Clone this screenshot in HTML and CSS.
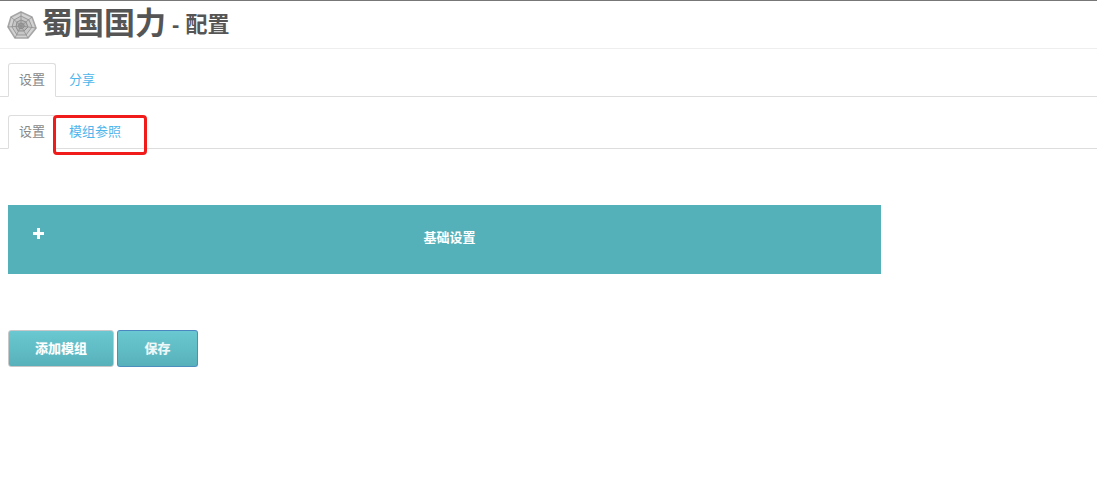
FILE: index.html

```html
<!DOCTYPE html>
<html lang="zh-CN">
<head>
  <meta charset="UTF-8" />
  <title>蜀国国力 - 配置</title>
  <link rel="stylesheet" href="styles.css">
</head>
<body>
  <header class="page-head">
    <svg class="logo" width="30" height="30" viewBox="0 0 30 30">
      <polygon points="14,1 25,6 29,17 21,27 8,27 1,16 4,6" fill="#d2d2d2" stroke="#a6a6a6" stroke-width="1.6"/>
      <polygon points="14,5 22,9 25,16 19,24 10,24 5,16 7,9" fill="#c6c6c6" stroke="#999"/>
      <polygon points="14,9 19,11 21,16 17,20 11,20 9,16 10,11" fill="#b6b6b6" stroke="#8f8f8f"/>
      <polygon points="14,12 16.500,13 17.500,15.500 15.500,17.500 12.500,17.500 11.500,15.500 12,13" fill="#a0a0a0" stroke="#858585" stroke-width=".8"/>
      <path d="M14 1V15M25 6L14 15M29 17L14 15M21 27L14 15M8 27L14 15M1 16L14 15M4 6L14 15" stroke="#8f8f8f" stroke-width=".8" fill="none"/>
    </svg>
    <h1>蜀国国力</h1>
    <span class="sub">- 配置</span>
  </header>

  <ul class="tabs tabs-main">
    <li class="active">设置</li>
    <li>分享</li>
  </ul>

  <ul class="tabs tabs-sub">
    <li class="active">设置</li>
    <li>模组参照</li>
    <li class="mark"></li>
  </ul>

  <section class="panel">
    <svg class="plus" width="11" height="11" viewBox="0 0 11 11"><path d="M4 0h3v4h4v3H7v4H4V7H0V4h4z" fill="#fff"/></svg>
    <span class="panel-title">基础设置</span>
  </section>

  <div class="actions">
    <button class="btn btn-add">添加模组</button>
    <button class="btn btn-save">保存</button>
  </div>
</body>
</html>
```

FILE: styles.css

```css
* { box-sizing: border-box; margin: 0; padding: 0; }
html, body { height: 100%; }
body { font-family: "Liberation Sans", "Noto Sans CJK SC", sans-serif; background: #fff; color: #555; border-top: 1px solid #777; font-size: 13px; overflow: hidden; }

.page-head { height: 48px; border-bottom: 1px solid #eee; padding: 7px 0 0 7px; display: flex; align-items: flex-start; }
.logo { margin-top: 3px; flex: none; }
.page-head h1 { font-size: 31px; line-height: 32px; font-weight: bold; color: #555; margin-left: 5px; }
.sub { font-size: 22px; line-height: 32px; font-weight: bold; color: #555; margin: 1px 0 0 6px; }

.tabs { list-style: none; display: flex; position: relative; padding-left: 8px; border-bottom: 1px solid #ddd; height: 34px; }
.tabs li { padding: 0 14px 0 13px; line-height: 33px; color: #4fb6ec; height: 34px; }
.tabs li.active { color: #888; background: #fff; border: 1px solid #ddd; border-bottom-color: #fff; border-radius: 3px 3px 0 0; padding: 0 10px; line-height: 31px; }
.tabs-main { margin-top: 14px; }
.tabs-sub { margin-top: 18px; }

.tabs li.mark { position: absolute; left: 53px; top: 0; width: 94px; height: 40px; border: 3px solid #f01c1c; border-radius: 4px; padding: 0; }

.panel { margin: 56px 0 0 8px; width: 873px; height: 69px; background: #54b1ba; color: #fff; position: relative; text-align: center; }
.plus { position: absolute; left: 25px; top: 23px; }
.panel-title { display: block; width: 883px; padding-top: 23px; line-height: 20px; font-weight: bold; font-size: 13px; }

.actions { display: flex; gap: 3px; margin: 56px 0 0 8px; }
.btn { height: 37px; padding-bottom: 2px; font-family: inherit; font-size: 13px; font-weight: bold; color: #fff; border-radius: 3px; background: linear-gradient(#69c8d1, #58b1ba); text-shadow: 0 0 1px rgba(255,255,255,.4); }
.btn-add { width: 106px; border: 1px solid #c8c8c8; }
.btn-save { width: 81px; border: 1px solid #4a8fbe; border-top-color: #4a86c0; color: #eef8f9; }
```
